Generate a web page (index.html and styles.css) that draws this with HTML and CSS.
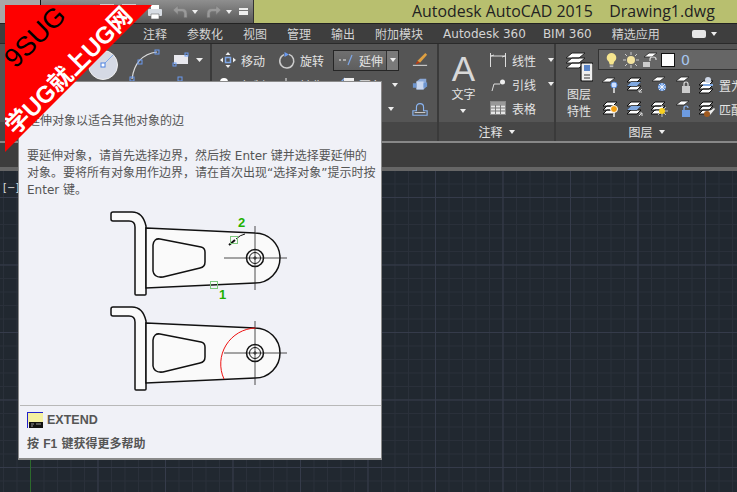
FILE: index.html
```html
<!DOCTYPE html>
<html lang="zh">
<head>
<meta charset="utf-8">
<title>AutoCAD 2015</title>
<link rel="stylesheet" href="styles.css">
</head>
<body>
<svg class="defs" width="0" height="0">
  <defs>
    <g id="sheet"><path d="M2 5 7 1h8l-5 4z" fill="#fff" stroke="#222" stroke-width=".8"/></g>
    <g id="stack"><path d="M1 6 5 2h10l-4 4zM1 10 5 6h10l-4 4zM1 14 5 10h10l-4 4z" fill="#fff" stroke="#111" stroke-width="1"/></g>
    <g id="part">
      <path d="M113 212h19c8 0 12 5 14 14v68q0 1-1 1h-9q-1 0-1-1v-67c0-4-2-6-6-6h-16q-2 0-2-2v-5q0-2 2-2z" fill="#fafafa" stroke="#111" stroke-width="1.5"/>
      <path d="M146 228 255 233a25 25 0 0 1 0 50L146 288z" fill="#fafafa" stroke="#111" stroke-width="1.5"/>
      <path d="M160 239 201 247q4 1 4 5v10q0 5-5 6l-37 9q-9 1-10-6v-26q1-7 7-6z" fill="#fafafa" stroke="#111" stroke-width="1.5"/>
      <circle cx="255" cy="258" r="8.5" fill="#fafafa" stroke="#111" stroke-width="1.5"/>
      <circle cx="255" cy="258" r="5.5" fill="#fafafa" stroke="#111" stroke-width="1"/>
      <path d="M224 258h63M255 226v64M253 258h4M255 256v4" fill="none" stroke="#222" stroke-width=".8"/>
    </g>
  </defs>
</svg>

<div class="app">
  <header class="titlebar">
    <div class="qat">
      <div class="app-btn"></div>
      <div class="qat-tools">
        <span class="qat-box"></span><span class="qat-box"></span>
        <svg class="ic16" viewBox="0 0 16 16"><path d="M4 1h8v4H4z" fill="#fff"/><rect x="1" y="5" width="14" height="7" rx="1" fill="#d8dde4"/><path d="M4 10h8v5H4z" fill="#fff" stroke="#666" stroke-width=".6"/></svg>
        <svg class="ic16 undo" viewBox="0 0 16 16"><path d="M1 6 6 1.500v3h4q5 0 5 5v4h-3v-4q0-2-2-2H6v3z" fill="#9a9a9a" stroke="#777" stroke-width=".6"/></svg>
        <span class="caret"></span>
        <svg class="ic16 redo" viewBox="0 0 16 16"><path d="M15 6 10 1.500v3H6q-5 0-5 5v4h3v-4q0-2 2-2h4v3z" fill="#9a9a9a" stroke="#777" stroke-width=".6"/></svg>
        <span class="caret"></span>
        <span class="menu-caret"></span>
      </div>
    </div>
    <div class="title-main">Autodesk AutoCAD 2015&nbsp;&nbsp;&nbsp;&nbsp;Drawing1.dwg</div>
  </header>

  <nav class="tabs">
    <span class="tab t1">注释</span><span class="tab t2">参数化</span><span class="tab t3">视图</span><span class="tab t3">管理</span><span class="tab t3">输出</span><span class="tab t4">附加模块</span><span class="tab t5">Autodesk 360</span><span class="tab t6">BIM 360</span><span class="tab">精选应用</span>
    <span class="tab-switch"><span class="tab-pill"></span><span class="caret"></span></span>
  </nav>

  <section class="ribbon">
    <div class="panel p-draw">
      <div class="panel-body">
        <svg class="draw-art" viewBox="0 0 212 78">
          <circle cx="103" cy="21" r="14.500" fill="#d5d9e4" stroke="#eee"/>
          <path d="M103 21 113 11" stroke="#7fa8e8"/>
          <rect x="101" y="19" width="4" height="4" fill="#fff" stroke="#4a80e0"/>
          <path d="M132 35Q135 11 157 8" fill="none" stroke="#ddd" stroke-width="1.200"/>
          <rect x="155" y="6" width="4" height="4" fill="none" stroke="#6a9af0"/>
          <rect x="138" y="16" width="4" height="4" fill="none" stroke="#6a9af0"/>
          <rect x="130" y="33" width="4" height="4" fill="none" stroke="#6a9af0"/>
          <rect x="174" y="11" width="14" height="9" fill="#e8e8ee"/>
          <rect x="185" y="9" width="3" height="3" fill="none" stroke="#6a9af0"/>
          <rect x="173" y="19" width="3" height="3" fill="none" stroke="#6a9af0"/>
          <path d="M196 14h7l-3.500 4z" fill="#eee"/>
          <rect x="178" y="33" width="4" height="4" fill="none" stroke="#6a9af0"/>
        </svg>
      </div>
      <div class="panel-foot"></div>
    </div>

    <div class="panel p-modify">
      <div class="panel-body modify-body">
        <div class="mod-row">
          <svg class="ic18" viewBox="0 0 18 18"><path d="M9 1 6.500 4h5zM9 17l-2.500-3h5zM1 9l3-2.500v5zM17 9l-3-2.500v5z" fill="#eee"/><rect x="6.500" y="6.500" width="5" height="5" fill="none" stroke="#7fa8e8" stroke-width="1.500"/></svg>
          <span class="rtxt">移动</span>
          <svg class="ic18 rot" viewBox="0 0 18 18"><path d="M11 3.400A7 7 0 1 1 6 3.600" fill="none" stroke="#ccc" stroke-width="1.500"/><path d="M6.500 1 11 3.500 6.500 6z" fill="#6a9af0"/></svg>
          <span class="rtxt">旋转</span>
          <div class="split">
            <span class="split-main"><svg class="ext" viewBox="0 0 16 14"><path d="M1 7h2M5 7h3" stroke="#eee" stroke-width="1.200"/><path d="M10 12 14 2" stroke="#7fa8e8" stroke-width="1.200"/></svg><span class="rtxt">延伸</span></span>
            <span class="split-arrow"><span class="caret"></span></span>
          </div>
          <svg class="ic18 side" viewBox="0 0 18 18"><path d="M1 15h16" stroke="#eee"/><path d="M6 10 15 1l2 2-8 9z" fill="#e0a040"/><path d="M6 10 9 12 4 14z" fill="#c03a10"/></svg>
        </div>
        <div class="mod-row row-end">
          <div class="hidden-row">
            <svg class="ic18" viewBox="0 0 18 18"><circle cx="5" cy="6" r="4" fill="#fff"/></svg>
            <span class="rtxt">复制</span>
            <svg class="ic18 rot" viewBox="0 0 18 18"><path d="M8 2v14" stroke="#eee"/><path d="M5 7h6" stroke="#eee"/></svg>
            <span class="rtxt">镜像</span>
            <svg class="ic18 rot" viewBox="0 0 18 18"><path d="M2 8 8 2" stroke="#7fa8e8" stroke-width="1.500"/><rect x="7" y="2" width="10" height="6" fill="#eee"/></svg>
            <span class="rtxt">圆角</span>
          </div>
          <span class="caret"></span>
          <svg class="ic18 side" viewBox="0 0 18 18"><path d="M5 5 9 2h7v9l-3 3H5z" fill="#8aa8d8"/><path d="M5 5h8v9H5z" fill="#c8d6ee"/><path d="M1 7h4v5H1zM13 7l4-1v5l-4 1z" fill="#6d95cf"/></svg>
        </div>
        <div class="mod-row row-end low">
          <span class="caret c2"></span>
          <svg class="ic18 side" viewBox="0 0 18 18"><path d="M1 16V11h4V7q0-4 4-4t4 4v4h4v5z" fill="none" stroke="#8ab4f0" stroke-width="1.300"/><path d="M3 13h12" stroke="#ddd"/></svg>
        </div>
      </div>
      <div class="panel-foot"></div>
    </div>

    <div class="panel p-note">
      <div class="panel-body note-body">
        <div class="big-text">
          <span class="big-a">A</span>
          <span class="big-label">文字</span>
          <span class="caret"></span>
        </div>
        <div class="note-list">
          <div class="note-row"><svg class="ic16" viewBox="0 0 16 16"><path d="M.5 1v14M15.500 1v14M1 4h14M1 4l3-1M15 4l-3 1" stroke="#ddd" fill="none"/></svg><span class="rtxt">线性</span><span class="caret"></span></div>
          <div class="note-row"><svg class="ic16" viewBox="0 0 16 16"><path d="M2 15 4 8h6" stroke="#ddd" fill="none"/><circle cx="12.500" cy="6" r="2.500" fill="#eee"/></svg><span class="rtxt">引线</span><span class="caret"></span></div>
          <div class="note-row"><svg class="ic16" viewBox="0 0 16 16"><rect x=".5" y="1.500" width="15" height="13" fill="#e6e6e6" stroke="#888"/><path d="M1 5h14M1 8h14M1 11h14M5.500 5v9M10.500 5v9" stroke="#777"/><path d="M1 2h14v3H1z" fill="#999"/></svg><span class="rtxt">表格</span></div>
        </div>
      </div>
      <div class="panel-foot"><span class="rtxt">注释</span><span class="caret"></span></div>
    </div>

    <div class="panel p-layer">
      <div class="panel-body layer-body">
        <div class="layer-big">
          <svg class="layer-stack" viewBox="0 0 28 31"><path d="M1 7 7 2h13l-6 5zM1 12 7 7h13l-6 5zM1 17 7 12h13l-6 5z" fill="#fff" stroke="#222"/><rect x="16" y="12" width="12" height="18" rx="1" fill="#eee" stroke="#111" stroke-width="1.200"/><rect x="19" y="14" width="6" height="6" fill="#5a85c8"/><path d="M19 24h6M19 27h6" stroke="#333"/></svg>
          <span class="big-label l2">图层<br>特性</span>
        </div>
        <div class="layer-tools">
          <div class="combo">
            <svg class="ic16 bulb" viewBox="0 0 14 18"><path d="M7 1a5.500 5.500 0 0 0-3 10l1 3h4l1-3A5.500 5.500 0 0 0 7 1z" fill="#f6e58e"/><path d="M5 15h4v2H5z" fill="#bbb"/></svg>
            <svg class="ic16" viewBox="0 0 16 16"><circle cx="8" cy="8" r="4" fill="#f4e4a0"/><path d="M8 0v3M8 13v3M0 8h3M13 8h3M2 2l2 2M12 12l2 2M14 2l-2 2M4 12l-2 2" stroke="#ccc"/></svg>
            <svg class="ic16" viewBox="0 0 16 16"><use href="#sheet"/><rect x="1" y="10" width="7" height="5" fill="#ccc"/><path d="M8 9V7q0-2 3-2t3 2v1" stroke="#ddd" fill="none" stroke-width="1.200"/></svg>
            <span class="swatch"></span>
            <span class="layer-zero">0</span>
          </div>
          <div class="icon-row">
            <svg class="ic18" viewBox="0 0 18 18"><use href="#sheet" x="-2" y="1"/><circle cx="12" cy="9" r="3" fill="#cfe0ff" stroke="#5a90e0"/><path d="M12 12v5" stroke="#eee" stroke-width="1.500"/></svg>
            <svg class="ic18" viewBox="0 0 18 18"><use href="#stack"/><path d="M1 10 5 6h10l-4 4z" fill="#7fa8e0"/><path d="M16 13l-3 3M13 13.500V16h3" stroke="#ddd" fill="none"/></svg>
            <svg class="ic18" viewBox="0 0 18 18"><use href="#sheet"/><circle cx="12" cy="11" r="4" fill="#5a90e0"/><path d="M8 11h8M12 7v8M9 8l6 6M15 8l-6 6" stroke="#fff" stroke-width=".8"/></svg>
            <svg class="ic18" viewBox="0 0 18 18"><use href="#sheet"/><rect x="8" y="10" width="8" height="7" fill="#ccc"/><path d="M10 10V8q0-2 2-2t2 2v2" stroke="#ddd" fill="none" stroke-width="1.200"/></svg>
            <svg class="ic18" viewBox="0 0 18 18"><use href="#stack" y="3"/><circle cx="10" cy="4" r="3" fill="#cfd8e8"/><path d="M5 9h10" stroke="#7fa8e0" stroke-width="2"/></svg>
            <span class="rtxt clip">置为</span>
          </div>
          <div class="icon-row">
            <svg class="ic18" viewBox="0 0 18 18"><use href="#stack"/><circle cx="12" cy="9" r="3.500" fill="#f4a010" stroke="#fff"/><path d="M12 12v5" stroke="#eee" stroke-width="1.500"/></svg>
            <svg class="ic18" viewBox="0 0 18 18"><use href="#stack"/><path d="M1 10 5 6h10l-4 4z" fill="#7fa8e0"/><path d="M13 16l3-3M13.500 13H16v3" stroke="#ddd" fill="none"/></svg>
            <svg class="ic18" viewBox="0 0 18 18"><use href="#stack"/><path d="M12 5v12M6 11h12M8 7l8 8M16 7l-8 8" stroke="#eee" stroke-width=".7"/><circle cx="12" cy="11" r="3" fill="#f8d020"/></svg>
            <svg class="ic18" viewBox="0 0 18 18"><use href="#sheet"/><rect x="8" y="10" width="8" height="7" fill="#6d9be0"/><path d="M10 10V8q0-2 2-2t2 2" stroke="#8ab4f0" fill="none" stroke-width="1.200"/></svg>
            <svg class="ic18" viewBox="0 0 18 18"><use href="#stack"/><path d="M9 13 16 8l1 1-5 6z" fill="#eee"/><circle cx="9" cy="14" r="3" fill="#a05a20"/></svg>
            <span class="rtxt clip">匹配</span>
          </div>
        </div>
      </div>
      <div class="panel-foot"><span class="rtxt">图层</span><span class="caret"></span></div>
    </div>
  </section>

  <div class="doc-strip"></div>
  <main class="canvas"><span class="view-label">[−]</span></main>
</div>

<aside class="tooltip">
  <p class="tip-title">延伸对象以适合其他对象的边</p>
  <p class="tip-text">要延伸对象，请首先选择边界，然后按 Enter 键并选择要延伸的对象。要将所有对象用作边界，请在首次出现“选择对象”提示时按 Enter 键。</p>
  <svg class="tip-art" viewBox="19 205 361 190">
    <use href="#part"/>
    <use href="#part" y="95"/>
    <path d="M229 245 235 240" stroke="#111" stroke-width="2"/>
    <path d="M236 239Q240 235 245 234" fill="none" stroke="#111"/>
    <rect x="230.500" y="236.500" width="7" height="7" fill="none" stroke="#7ec87e"/>
    <rect x="210.500" y="281.500" width="7" height="7" fill="none" stroke="#7ec87e"/>
    <text class="pick" x="238" y="227">2</text>
    <text class="pick" x="219" y="299">1</text>
    <path d="M255.500 328A36 36 0 0 0 224 379" fill="none" stroke="#ee1111"/>
  </svg>
  <div class="tip-foot">
    <div class="tip-cmd">
      <svg class="cmd-ic" viewBox="0 0 16 16"><rect width="16" height="12" fill="#f4f0a0"/><path d="M0 .5h16" stroke="#2222cc"/><path d="M.5 0v16" stroke="#2222cc"/><rect x="2" y="10" width="14" height="6" fill="#111"/><path d="M4 12h3M9 12h5M4 14h2" stroke="#999"/></svg>
      <b>EXTEND</b>
    </div>
    <p class="tip-help">按 <b>F1</b> 键获得更多帮助</p>
  </div>
</aside>

<div class="watermark">
  <span class="wm-top">9SUG</span>
  <span class="wm-main">学UG就上UG网</span>
</div>
</body>
</html>
```

FILE: styles.css
```css
* { box-sizing: border-box; }
html, body { margin: 0; padding: 0; }
body {
  width: 737px; height: 492px; overflow: hidden; position: relative;
  font-family: "DejaVu Sans", "Noto Sans CJK SC", sans-serif;
  font-size: 12px; background: #212830; color: #ddd;
}
.defs { position: absolute; }
.app { display: flex; flex-direction: column; height: 492px; }
svg { display: block; flex: none; }

/* title bar */
.titlebar { display: flex; height: 23px; flex: none; }
.qat { width: 254px; display: flex; background: linear-gradient(#8f8f8f, #585858); border-right: 1px solid #333; }
.app-btn { width: 41px; background: #a8a8a8; border-right: 1px solid #111; }
.qat-tools { display: flex; align-items: center; padding-left: 59px; }
.qat-box { width: 14px; height: 16px; margin-right: 8px; background: #ccc; }
.qat-tools .ic16 { margin-left: 3px; }
.qat-tools .undo { margin-left: 9px; }
.qat-tools .redo { margin-left: 8px; }
.qat-tools .caret { margin-left: 4px; }
.menu-caret { width: 9px; height: 7px; margin-left: 7px; border-top: 2px solid #eee; border-bottom: 4px solid #eee; }
.title-main { flex: 1; background: #b8bf6f; color: #222; font-size: 15.900px; line-height: 23px; padding-left: 158px; white-space: nowrap; font-family: "Open Sans", sans-serif; }

/* tabs */
.tabs { height: 20px; flex: none; display: flex; align-items: center; padding-left: 143px; background: #3e3e3e; border-top: 1px solid #222; color: #d4d4d4; white-space: nowrap; }
.tab { margin-right: 20px; }
.t5 { margin-right: 17px; }
.t6 { margin-right: 20px; }
.tab-switch { display: flex; align-items: center; gap: 5px; margin-left: 12px; }
.tab-pill { width: 14px; height: 8px; border-radius: 2px; background: #e6e6e6; }

.caret { display: inline-block; width: 0; height: 0; border-left: 3.500px solid transparent; border-right: 3.500px solid transparent; border-top: 4px solid #eee; flex: none; }

/* ribbon */
.ribbon { height: 98px; flex: none; display: flex; background: #555; border-top: 1px solid #2a2a2a; }
.panel { display: flex; flex-direction: column; border-right: 2px solid #3a3a3a; }
.panel-body { height: 78px; flex: none; }
.panel-foot { height: 19px; background: #464646; display: flex; align-items: center; justify-content: center; gap: 6px; color: #e4e4e4; }
.p-draw { width: 212px; }
.draw-art { width: 212px; height: 78px; }
.p-modify { width: 227px; }
.p-note { width: 117px; }
.p-layer { flex: 1; border-right: 0; overflow: hidden; }
.rtxt { font-size: 12px; color: #e4e4e4; white-space: nowrap; }
.ic16 { width: 16px; height: 16px; }
.ic18 { width: 18px; height: 18px; }

.modify-body { padding: 5px 9px 0 7px; display: flex; flex-direction: column; }
.mod-row { display: flex; align-items: center; height: 22px; gap: 4px; }
.rot { margin-left: 9px; }
.split { display: flex; width: 66px; height: 21px; margin-left: 5px; border: 1px solid #262626; }
.split-main { flex: 1; display: flex; align-items: center; gap: 5px; padding-left: 4px; background: linear-gradient(#707070, #5e5e5e); }
.ext { width: 16px; height: 14px; }
.split-arrow { width: 12px; display: flex; align-items: center; justify-content: center; background: #7a7a7a; border-left: 1px solid #333; }
.side { margin-left: 9px; width: 16px; }
.row-end { justify-content: flex-end; gap: 0; height: 24px; margin-top: 2px; }
.row-end .caret { margin-right: 5px; }
.row-end .c2 { margin-right: 9px; }
.low { margin-top: 0; }
.hidden-row { display: flex; align-items: center; gap: 4px; margin-right: auto; }

.note-body { display: flex; padding: 10px 0 0 12px; }
.big-text { width: 28px; display: flex; flex-direction: column; align-items: center; }
.big-a { font: 35px/30px "Liberation Sans", sans-serif; color: #d8d8d8; }
.big-label { font-size: 12px; line-height: 17px; color: #e4e4e4; text-align: center; margin-top: 3px; }
.big-text .caret { margin-top: 5px; }
.note-list { margin-left: 14px; margin-top: -2px; display: flex; flex-direction: column; gap: 8px; }
.note-row { display: flex; align-items: center; height: 16px; gap: 6px; }
.note-row .caret { margin-left: 6px; }

.layer-body { display: flex; padding: 5px 0 0 9px; }
.layer-big { width: 28px; display: flex; flex-direction: column; align-items: center; flex: none; }
.layer-stack { width: 28px; height: 31px; margin-top: 2px; }
.l2 { margin-top: 5px; }
.layer-tools { margin-left: 5px; display: flex; flex-direction: column; flex: none; width: 145px; overflow: hidden; }
.combo { height: 21px; display: flex; align-items: center; gap: 3px; padding-left: 6px; background: #666; border: 1px solid #333; border-right: 0; }
.bulb { width: 13px; margin-right: 2px; }
.swatch { width: 14px; height: 14px; background: #fff; border: 1px solid #111; }
.layer-zero { color: #a8c8f0; font-size: 14px; margin-left: 3px; }
.icon-row { display: flex; align-items: center; height: 24px; margin-top: 3px; padding-left: 4px; gap: 6px; }
.icon-row + .icon-row { margin-top: 0; }
.clip { margin-left: -3px; }

/* doc strip + canvas */
.doc-strip { height: 30px; flex: none; background: #3d3d3d; border-top: 2px solid #888; border-bottom: 4px solid #666; }
.canvas {
  flex: 1; padding: 9px 0 0 3px;
  background-color: #212830;
  background-image:
    linear-gradient(90deg, #2c6a2c, #2c6a2c),
    linear-gradient(90deg, #353b4a 1px, transparent 1px),
    linear-gradient(#353b4a 1px, transparent 1px),
    linear-gradient(90deg, #2a303a 1px, transparent 1px),
    linear-gradient(#2a303a 1px, transparent 1px);
  background-size: 1px 100%, 67.500px 100%, 100% 67.500px, 13.500px 100%, 100% 13.500px;
  background-position: 30px 0, 30px 0, 0 26px, 3px 0, 0 12.500px;
  background-repeat: no-repeat, repeat, repeat, repeat, repeat;
}
.view-label { font-size: 10px; color: #ddd; }

/* tooltip */
.tooltip {
  position: absolute; left: 18px; top: 81px; width: 364px; height: 379px;
  background: #f0f1f7; border: 1px solid #8a8a8a; border-bottom-width: 2px; color: #555; font-size: 12px;
}
.tooltip p { margin: 0; }
.tip-title { padding: 31px 8px 0 9px; line-height: 17px; }
.tip-text { padding: 18px 4px 0 8px; line-height: 17px; }
.tip-art { width: 361px; height: 190px; margin-top: 6px; }
.pick { font: bold 13px "Liberation Sans", sans-serif; fill: #22b000; }
.tip-foot { margin: 10px 0 0 1px; border-top: 1px solid #b8b8b8; padding: 5px 0 0 7px; }
.tip-cmd { display: flex; align-items: center; gap: 4px; height: 16px; margin-top: 1px; }
.tip-cmd b { color: #555; font: bold 12.500px "Liberation Sans", sans-serif; }
.cmd-ic { width: 16px; height: 16px; }
.tip-help { margin-top: 8px !important; line-height: 17px; font-weight: 700; }
.tip-help b { font-family: "Liberation Sans", sans-serif; }

/* watermark */
.watermark {
  position: absolute; left: 5px; top: 5px; width: 147px; height: 147px;
  background: #fe0000; clip-path: polygon(0 0, 100% 0, 0 100%);
}
.wm-top, .wm-main { position: absolute; transform: rotate(-45deg); white-space: nowrap; text-align: center; width: 180px; }
.wm-top { left: -60px; top: 17px; font: 27px/30px "Liberation Sans", sans-serif; color: #000; }
.wm-main { left: -26px; top: 51px; font: bold 24px/30px "Liberation Sans", "Noto Sans CJK SC", sans-serif; color: #fff; }
```
